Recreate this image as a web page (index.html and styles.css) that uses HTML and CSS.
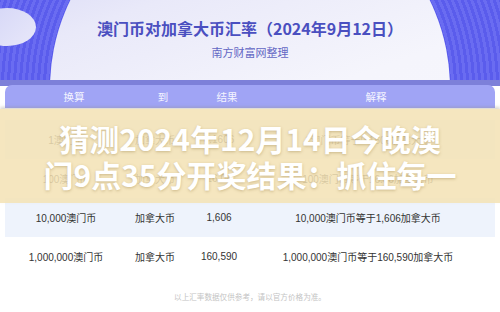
FILE: index.html
```html
<!DOCTYPE html>
<html lang="zh">
<head>
	<meta charset="UTF-8">
	<meta name="viewport" content="width=device-width, initial-scale=1.0">
	<title>澳门币对加拿大币汇率</title>
	<link rel="stylesheet" href="styles.css">
</head>

<body>
	<div class="page">
		<div class="hero">
			<div class="blob"></div>
			<div class="disc"></div>
			<div class="hero-text">
				<h1 class="title">澳门币对加拿大币汇率（2024年9月12日）</h1>
				<div class="subtitle">南方财富网整理</div>
			</div>
		</div>

		<div class="sheet">
			<div class="row head">
				<span>换算</span>
				<span>到</span>
				<span>结果</span>
				<span>解释</span>
			</div>

			<div class="rows">
				<div class="row alt">
					<span>1澳门币</span>
					<span>加拿大币</span>
					<span>0.1606</span>
					<span>1澳门币等于0.1606加拿大币</span>
				</div>
				<div class="row">
					<span>100澳门币</span>
					<span>加拿大币</span>
					<span>16.06</span>
					<span>100澳门币等于16.06加拿大币</span>
				</div>
				<div class="row alt">
					<span>10,000澳门币</span>
					<span>加拿大币</span>
					<span>1,606</span>
					<span>10,000澳门币等于1,606加拿大币</span>
				</div>
				<div class="row">
					<span>1,000,000澳门币</span>
					<span>加拿大币</span>
					<span>160,590</span>
					<span>1,000,000澳门币等于160,590加拿大币</span>
				</div>
			</div>

			<div class="note">以上汇率数据仅供参考，请以官方价格为准。</div>

			<!-- headline banner over the table -->
			<div class="banner">
				<div class="banner-text">猜测2024年12月14日今晚澳<br>门9点35分开奖结果：抓住每一</div>
			</div>
		</div>
	</div>
</body>

</html>
```

FILE: styles.css
```css
		body,
		html {
			margin: 0;
			padding: 0;
		}

		body {
			font-family: "Noto Sans CJK SC", "Noto Sans", sans-serif;
			background: #fff;
			color: #333;
		}

		*,
		*::after,
		*::before {
			box-sizing: border-box;
		}

		.page {
			width: 500px;
			height: 312px;
			overflow: hidden;
		}

		/* top header with rings */
		.hero {
			position: relative;
			height: 80px;
			overflow: hidden;
			background: repeating-radial-gradient(circle at 250px 88px, #5a5cec 0 3px, #6a6cf1 3px 6px);
		}

		.blob {
			position: absolute;
			left: -22px;
			top: 8px;
			width: 58px;
			height: 38px;
			border-radius: 50%;
			background: linear-gradient(135deg, #d3d4f6, #e8e8fa);
		}

		.disc {
			position: absolute;
			left: 50px;
			top: -112px;
			width: 400px;
			height: 400px;
			border-radius: 50%;
			background: linear-gradient(160deg, #cdcef4 0%, #e9e9f9 28%, #f5f5fc 55%, #f7f7fd 100%);
		}

		.hero-text {
			position: relative;
			padding-top: 18px;
			text-align: center;
		}

		.title {
			margin: 0;
			font-size: 16px;
			line-height: 20px;
			font-weight: 700;
			color: #4a4fc0;
		}

		.subtitle {
			margin-top: 7px;
			font-size: 11px;
			line-height: 14px;
			color: #6367c4;
		}

		/* table */
		.sheet {
			position: relative;
			padding-top: 5px;
			background: linear-gradient(to bottom, #7d80d9 0 6px, #fff 6px);
		}

		.row {
			display: grid;
			grid-template-columns: 122px 56px 72px 226px;
			align-items: center;
			margin: 0 5px;
			height: 39px;
			font-family: "Liberation Sans", "Noto Sans CJK SC", sans-serif;
			font-size: 10px;
			text-align: center;
			white-space: nowrap;
		}

		.row.head {
			height: 23px;
			padding-left: 8px;
			border-radius: 7px 7px 0 0;
			background: #a0a4f5;
			color: #f4f4ff;
			font-size: 10.5px;
		}

		.rows {
			margin-top: 12px;
		}

		.row.alt {
			background: #eef3fc;
		}

		.note {
			margin-top: 16px;
			font-size: 7.6px;
			line-height: 10px;
			text-align: center;
			color: #c4c4c4;
		}

		.banner {
			position: absolute;
			left: 0;
			right: 0;
			top: 29px;
			height: 94px;
			padding-top: 11px;
			background: rgba(243, 226, 180, 0.86);
			box-shadow: 0 -2px 3px rgba(150, 140, 120, 0.35);
		}

		.banner-text {
			text-align: center;
			font-size: 30px;
			line-height: 36px;
			font-weight: 700;
			color: #fff;
			white-space: nowrap;
			text-shadow: 0 1px 3px rgba(130, 100, 40, 0.35);
		}
```
